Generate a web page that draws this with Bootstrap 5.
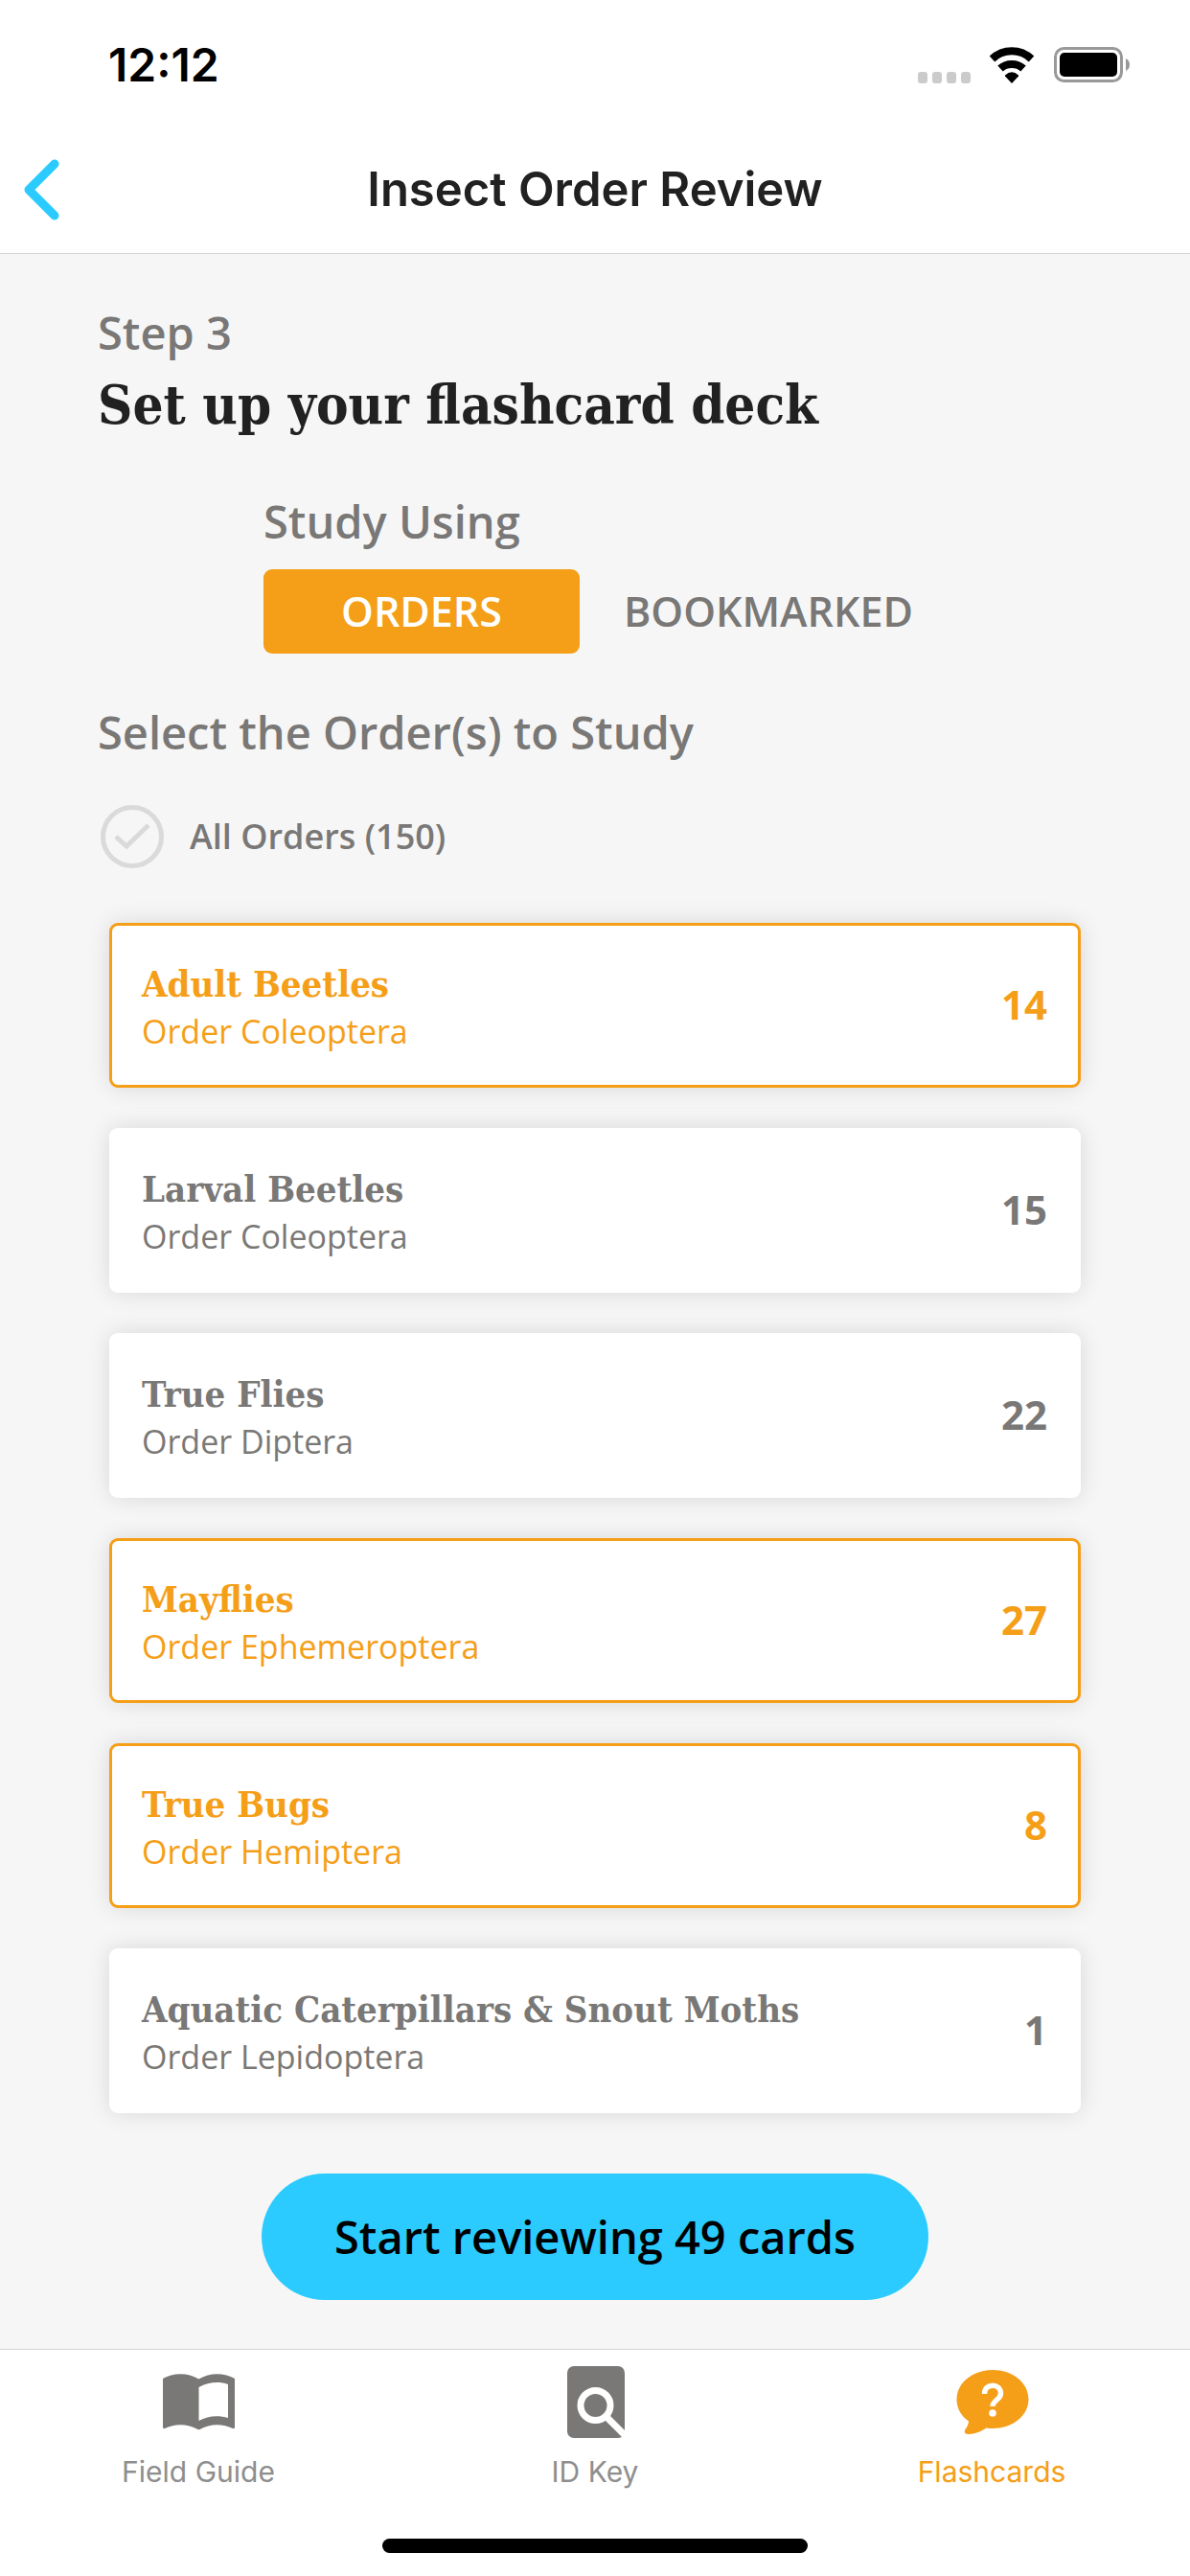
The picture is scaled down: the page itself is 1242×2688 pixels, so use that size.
<!doctype html>
<html lang="en">
<head>
<meta charset="utf-8">
<meta name="viewport" content="width=device-width, initial-scale=1">
<title>Insect Order Review</title>
<link href="https://cdn.jsdelivr.net/npm/bootstrap@5.3.0/dist/css/bootstrap.min.css" rel="stylesheet">
<style>
  :root { --amber: #f59e17; --sky: #2bcbff; --stone: #797876; --ink: #212121; }
  body { font-family: "Open Sans", "Noto Sans", sans-serif; background: #f6f6f6; color: var(--stone); }
  .system-font { font-family: Inter, Roboto, sans-serif; }

  .app-header { border-bottom: 1px solid #d4d4d4; }
  .status-bar { height: 132px; padding: 4px 63px 0 113px; }
  .status-time { font-size: 48px; line-height: 60px; font-weight: 600; color: #000; }
  .title-bar { height: 132px; padding: 0 24px; }
  .title-bar h1 { font-size: 49px; line-height: 60px; font-weight: 600; color: var(--ink); }
  .side-slot { width: 72px; }

  .page-body { padding: 52px 102px 51px; }
  .section-label { font-size: 47px; line-height: 60px; font-weight: 600; }
  .deck-title { font-family: "Roboto Slab", "DejaVu Serif Condensed", "DejaVu Serif", serif; font-size: 56px; line-height: 72px; font-weight: 700; color: var(--ink); margin-top: 9px; }

  .study-group { width: 692px; max-width: 100%; margin: 56px auto 52px; }
  .study-choices { gap: 32px; margin-top: 20px; }
  .study-choices .btn { height: 88px; padding: 0; border: 0; border-radius: 9px; font-size: 43px; line-height: 60px; font-weight: 600; color: var(--stone); }
  .study-choices .btn-check:checked + .btn { background: var(--amber); color: #fff; }

  .all-orders { margin: 46px 0 57px; padding-left: 3px; gap: 27px; }
  .all-orders label { font-size: 36px; line-height: 48px; font-weight: 600; }
  .round-check { appearance: none; width: 66px; height: 66px; margin: 0; border: 5px solid #dadada; border-radius: 50%; background: url("data:image/svg+xml,%3Csvg xmlns='http://www.w3.org/2000/svg' viewBox='0 0 56 56'%3E%3Cpath d='M11 28 22 38 45 16' fill='none' stroke='%23dadada' stroke-width='5'/%3E%3C/svg%3E") center / 100% no-repeat; }

  .order-list { gap: 42px; padding: 0 12px; }
  .order-card { padding: 35px 32px 33px 31px; border: 3px solid #fff; border-radius: 9px; background: #fff; color: var(--stone); box-shadow: 0 0 24px rgba(0, 0, 0, .12); }
  .order-card[aria-pressed="true"] { border-color: var(--amber); color: var(--amber); }
  .order-name { font-family: "Roboto Slab", "DejaVu Serif Condensed", "DejaVu Serif", serif; font-size: 38px; line-height: 52px; font-weight: 700; }
  .order-latin { font-size: 34px; line-height: 46px; }
  .order-count { font-size: 42px; line-height: 60px; font-weight: 700; padding-bottom: 4px; }

  .start-btn { width: 696px; max-width: 100%; height: 132px; margin-top: 63px; background: var(--sky); color: #000; font-size: 47px; line-height: 60px; font-weight: 600; }
  .start-btn:hover { background: #22b8e8; }

  .tab-bar { border-top: 1px solid #d4d4d4; padding-bottom: 24px; }
  .tab-link { padding-top: 14px; color: #8e8e8e; font-size: 30px; line-height: 36px; }
  .tab-link svg { width: 90px; height: 90px; color: var(--stone); }
  .tab-link.active, .tab-link.active svg { color: var(--amber); }
  .tab-link span { margin-top: 5px; }
  .home-indicator { width: 444px; height: 15px; background: #000; margin-top: 52px; }
</style>
<script src="https://cdn.jsdelivr.net/npm/bootstrap@5.3.0/dist/js/bootstrap.bundle.min.js" defer></script>
</head>
<body class="d-flex flex-column min-vh-100">

<header class="app-header bg-white">
  <div class="status-bar system-font d-flex align-items-center justify-content-between">
    <span class="status-time">12:12</span>
    <svg width="221" height="40" viewBox="0 0 221 40" aria-hidden="true">
      <g fill="#cbcbcb"><rect y="27" width="10" height="12" rx="3"/><rect x="15" y="27" width="10" height="12" rx="3"/><rect x="30" y="27" width="10" height="12" rx="3"/><rect x="45" y="27" width="10" height="12" rx="3"/></g>
      <g fill="none" stroke="#000" stroke-width="8"><path d="M77.500 13.500C89 2.500 107 2.500 118.500 13.500"/><path d="M86 23.500C92.500 17.500 103.500 17.500 110 23.500"/></g>
      <path d="M91 30.500Q98 24 105 30.500V31.500L98 39 91 31.500Z"/>
      <rect x="143.500" y="2.500" width="69" height="34" rx="9" fill="none" stroke="#999" stroke-width="3"/>
      <rect x="148" y="7" width="60" height="25" rx="5"/>
      <path d="M217 13Q221 15 221 19.500T217 26Z" fill="#999"/>
    </svg>
  </div>
  <nav class="title-bar system-font d-flex align-items-center justify-content-between" aria-label="Page">
    <a href="#" class="side-slot d-flex" aria-label="Back">
      <svg width="38" height="64" viewBox="0 0 38 64" fill="none" stroke="#2bcbff" stroke-width="9" stroke-linecap="round" stroke-linejoin="round"><path d="M33 5 6 32 33 59"/></svg>
    </a>
    <h1 class="m-0 text-center">Insect Order Review</h1>
    <span class="side-slot"></span>
  </nav>
</header>

<main class="page-body flex-grow-1">
  <p class="section-label m-0">Step 3</p>
  <h2 class="deck-title mb-0">Set up your flashcard deck</h2>

  <div class="study-group" role="radiogroup" aria-labelledby="study-label">
    <p class="section-label m-0" id="study-label">Study Using</p>
    <div class="study-choices d-flex">
      <input type="radio" class="btn-check" name="study" id="study-orders" checked>
      <label class="btn flex-fill w-50 d-flex align-items-center justify-content-center" for="study-orders">ORDERS</label>
      <input type="radio" class="btn-check" name="study" id="study-bookmarked">
      <label class="btn flex-fill w-50 d-flex align-items-center justify-content-center" for="study-bookmarked">BOOKMARKED</label>
    </div>
  </div>

  <h3 class="section-label m-0">Select the Order(s) to Study</h3>
  <div class="all-orders d-flex align-items-center">
    <input type="checkbox" class="round-check" id="all-orders">
    <label for="all-orders">All Orders (150)</label>
  </div>

  <div class="order-list d-flex flex-column">
    <button type="button" class="order-card d-flex align-items-center justify-content-between text-start" aria-pressed="true">
      <span class="d-flex flex-column"><span class="order-name">Adult Beetles</span><span class="order-latin">Order Coleoptera</span></span>
      <span class="order-count">14</span>
    </button>
    <button type="button" class="order-card d-flex align-items-center justify-content-between text-start" aria-pressed="false">
      <span class="d-flex flex-column"><span class="order-name">Larval Beetles</span><span class="order-latin">Order Coleoptera</span></span>
      <span class="order-count">15</span>
    </button>
    <button type="button" class="order-card d-flex align-items-center justify-content-between text-start" aria-pressed="false">
      <span class="d-flex flex-column"><span class="order-name">True Flies</span><span class="order-latin">Order Diptera</span></span>
      <span class="order-count">22</span>
    </button>
    <button type="button" class="order-card d-flex align-items-center justify-content-between text-start" aria-pressed="true">
      <span class="d-flex flex-column"><span class="order-name">Mayflies</span><span class="order-latin">Order Ephemeroptera</span></span>
      <span class="order-count">27</span>
    </button>
    <button type="button" class="order-card d-flex align-items-center justify-content-between text-start" aria-pressed="true">
      <span class="d-flex flex-column"><span class="order-name">True Bugs</span><span class="order-latin">Order Hemiptera</span></span>
      <span class="order-count">8</span>
    </button>
    <button type="button" class="order-card d-flex align-items-center justify-content-between text-start" aria-pressed="false">
      <span class="d-flex flex-column"><span class="order-name">Aquatic Caterpillars &amp; Snout Moths</span><span class="order-latin">Order Lepidoptera</span></span>
      <span class="order-count">1</span>
    </button>
  </div>

  <button type="button" class="start-btn btn rounded-pill border-0 d-block mx-auto">Start reviewing 49 cards</button>
</main>

<footer class="tab-bar bg-white system-font">
  <nav class="row g-0" aria-label="Main">
    <a href="#" class="tab-link col d-flex flex-column align-items-center text-decoration-none">
      <svg viewBox="0 0 90 90" aria-hidden="true"><path fill="currentColor" fill-rule="evenodd" d="M8 16C19 9.500 34 9.500 45.500 16.500C57 9.500 72 9.500 83 16V67Q83 68.500 81 68C70 62.500 57 63 46.500 69Q45.500 69.500 44.500 69C34 63 21 62.500 10 68Q8 68.500 8 67ZM45.500 25V60C55 55 65 54 76 57V22C66 18.500 55 20 45.500 25Z"/></svg>
      <span>Field Guide</span>
    </a>
    <a href="#" class="tab-link col d-flex flex-column align-items-center text-decoration-none">
      <svg viewBox="0 0 90 90" aria-hidden="true"><rect x="16" y="3" width="60" height="75" rx="7" fill="currentColor"/><circle cx="45.500" cy="44" r="15.500" fill="none" stroke="#fff" stroke-width="7"/><path d="M56 55 78 77" stroke="#fff" stroke-width="7"/></svg>
      <span>ID Key</span>
    </a>
    <a href="#" class="tab-link active col d-flex flex-column align-items-center text-decoration-none" aria-current="page">
      <svg viewBox="0 0 90 90" aria-hidden="true"><path fill="currentColor" d="M46 7C66.500 7 83.500 20 83.500 37.500S66.500 68 46 68Q42.500 68 39.500 67.500C33.500 71.500 26.500 74 20.500 74C16.500 74 16 71 17.500 69C20 66 21 62 21 60.500C13 55 8.500 47 8.500 37.500C8.500 20 25.500 7 46 7Z"/><path d="M37.500 32C37.500 20 54.500 20.500 54.500 31.500C54.500 38 46 38.500 46 45" fill="none" stroke="#fff" stroke-width="5.500"/><circle cx="46" cy="52" r="3.800" fill="#fff"/></svg>
      <span>Flashcards</span>
    </a>
  </nav>
  <div class="home-indicator rounded-pill mx-auto"></div>
</footer>

</body>
</html>
